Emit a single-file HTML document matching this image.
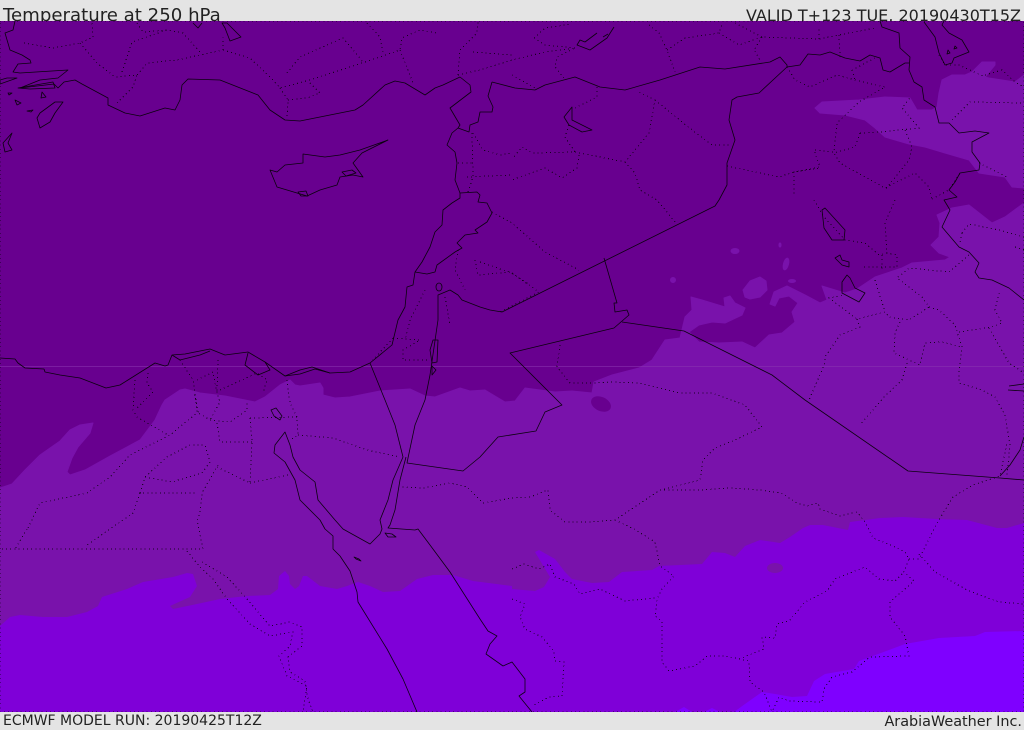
<!DOCTYPE html>
<html><head><meta charset="utf-8"><title>Temperature at 250 hPa</title>
<style>
html,body{margin:0;padding:0;background:#e4e4e4;width:1024px;height:729px;overflow:hidden}
.t{position:absolute;font-family:"DejaVu Sans",sans-serif;color:#222;white-space:pre;line-height:1}
svg{position:absolute;left:0;top:21px}
</style></head><body>
<div class="t" style="left:3px;top:7px;font-size:18.15px">Temperature at 250 hPa</div>
<div class="t" style="right:3px;top:8px;font-size:16px">VALID T+123 TUE, 20190430T15Z</div>
<div class="t" style="left:3px;top:714px;font-size:14px">ECMWF MODEL RUN: 20190425T12Z</div>
<div class="t" style="right:2px;top:715px;font-size:14.4px">ArabiaWeather Inc.</div>
<svg width="1024" height="691" viewBox="0 21 1024 691">
<rect x="0" y="21" width="1024" height="691" fill="#68008f"/>
<g fill="#7912ab" stroke="#7912ab" stroke-width="1" stroke-linejoin="round">
<path d="M0 488L12 484 25 470 40 455 60 441 70 430 80 425 93 423 90 433 78 447 72 458 67 472 70 475 85 470 110 456 140 440 155 420 162 405 165 400 180 390 185 389 200 393 225 396 255 402 265 397 280 385 290 380 295 385 300 386 320 383 323 388 323 395 335 398 350 397 380 391 410 389 425 396 435 397 460 388 470 391 485 390 505 402 515 401 525 388 555 392 572 391 592 393 594 382 612 375 639 368 652 360 665 340 680 338 685 317 692 310 691 297 702 300 725 307 724 298 730 296 735 303 745 308 742 315 725 323 712 322 699 325 689 332 699 342 719 343 742 342 755 348 769 335 782 333 795 322 792 312 798 303 789 296 779 298 775 306 770 304 774 292 787 286 805 295 820 303 827 300 822 286 845 293 857 289 875 277 902 268 912 263 945 260 950 257 939 253 931 245 939 237 940 223 937 215 952 208 969 205 992 223 1005 217 1024 203V712H0Z"/>
<path d="M1024 75L1015 82 989 78 985 77 995 65 995 62 982 62 972 72 965 75 952 75 942 80 939 93 937 107 932 110 917 110 910 98 885 97 859 100 822 102 815 108 820 113 845 115 865 120 875 128 885 137 909 144 925 147 945 153 969 160 979 173 1005 177 1012 187 1024 188Z"/>
<ellipse cx="735" cy="251" rx="4" ry="2.5"/><ellipse cx="673" cy="280" rx="2.5" ry="2.5"/><path d="M743 290L750 281 760 277 766 281 767 290 760 297 750 299 745 297Z"/><ellipse cx="792" cy="281" rx="3.5" ry="1.5"/><ellipse cx="786" cy="264" rx="2.5" ry="6" transform="rotate(15 786 264)"/><ellipse cx="780" cy="245" rx="1" ry="2"/><circle cx="807" cy="310" r="0.7"/>
</g>
<ellipse cx="601" cy="404" rx="10.5" ry="7" transform="rotate(25 601 404)" fill="#68008f"/>
<path fill="#7f00d8" d="M0 626L10 617 20 615 43 617 67 617 87 612 98 606 102 597 127 589 143 582 173 577 187 573 193 574 197 586 190 597 170 606 173 609 197 604 220 599 247 596 270 595 278 589 279 576 285 571 289 576 290 584 295 589 299 586 303 576 307 576 320 586 337 589 347 586 358 582 370 586 383 592 400 591 417 579 433 575 453 575 473 581 512 586 512 589 535 591 544 587 550 577 535 552 539 550 555 559 565 572 572 579 592 583 609 582 622 572 652 570 659 566 702 564 712 552 725 553 735 557 745 546 760 540 780 543 790 537 803 528 810 525 823 525 848 530 850 522 880 518 903 517 937 519 967 520 997 528 1007 528 1024 523V712H0Z"/>
<ellipse cx="775" cy="568" rx="8" ry="5" fill="#7912ab"/>
<path fill="#7f00ff" d="M1024 631L985 632 975 636 939 638 905 644 870 657 859 661 854 669 825 674 814 681 807 696 792 697 775 694 762 692 745 704 734 712H1024ZM675 712L684 707 692 712ZM704 712L712 708 720 712Z"/>
<rect x="0" y="366" width="1024" height="1" fill="#8a35b0" opacity=".55"/>
<g fill="none" stroke="#000" stroke-width="1" stroke-dasharray="1 3.2" shape-rendering="crispEdges" opacity=".8">
<path d="M0 21H1024V712H0ZM24 43L53 48 80 43 93 37 92 23M80 43L97 63 115 77 137 75 147 63 177 60 223 50 223 37M117 103L133 87 137 75M122 72L132 42 167 30 183 33 200 52M137 23L143 32 167 30M223 50L250 58 273 80 280 88 310 80 365 62 400 50 402 38 420 30 437 33M287 73L300 57 343 38 363 62M280 88L288 100 287 117M288 100L307 98 320 93 310 83M367 23L380 37 383 53M400 50L413 83M458 75L460 50 477 33 478 22M473 52L512 55M458 75L480 70 512 60 545 52 575 48 557 57 555 67 564 78M534 38L545 28 572 24M534 38L545 45 575 48M649 25L659 33 667 50 675 72M667 50L685 38 719 33 722 25M719 33L739 45 762 37 819 39 839 35 875 28M735 23L762 37M819 39V27M839 35L840 57M762 37L754 50 760 60M787 67L795 80 810 87 837 75 855 80 885 87 859 102 837 123 834 152 814 150 820 167 794 172 794 197M852 70L855 80M875 58L852 70M860 133L880 132 919 128 902 108 910 98M905 130L912 147 909 160 885 190M860 133L855 147 834 153 840 163 885 188 915 173 929 187 932 199M952 120L970 102 1024 103M985 75L1002 70 1015 82 1024 87M939 55L945 65 959 65 985 77M979 163L1009 178M932 199L949 190 960 173M472 133L473 177 468 192M473 133L483 150 500 155 512 153M458 163H473M467 177L512 175M597 87V97L575 108M569 125L565 137 575 152 532 153 522 147 514 157M575 152L625 162 649 133 655 100 639 92M655 100L692 130 712 145 732 145M579 155L577 168 562 178 545 168 512 180M625 162L635 173 640 190 657 200 675 222M727 166L779 177 794 172 820 168M512 75L535 88M492 212L512 223 545 252 579 270M480 262L512 273 539 292 500 312M458 250L455 270 465 290M895 200L885 223 887 253 897 255 897 267 862 267M814 200L824 217 845 240 865 243 879 255 887 253M882 255V270M962 233L960 243M962 233L969 224 999 230 1024 237M1015 247L1024 250M969 255L949 272 909 268 897 278 922 297 929 307 909 320 889 317 885 312 857 319 829 298 845 295M875 280L885 312M857 319L860 327 840 335 825 357 825 363 809 400M929 307L939 310 955 325 962 347 959 373 959 383 982 390 995 397 1005 415 1010 445 1007 475M959 332L992 327 1002 323 995 310 1000 290M989 328L1009 363 1024 373M900 322L895 333 894 353 920 365 925 343 942 342 962 347M907 363L902 380 884 397 860 425M560 345L557 367 570 383 594 383 612 382 639 383 679 393 712 393 745 405 762 427 735 440 715 448 703 460 700 480 660 490 615 520 590 522 565 522 550 510 548 490 530 497 512 498 483 503 467 487 450 483 423 488 402 487M660 490L700 490 730 488 760 490 781 493 797 503 807 506 818 503 820 509 840 516 857 512 865 522 873 538 893 546 905 552 909 559 904 572 914 581 890 602 890 617 905 636 909 656 870 657 852 672 832 677 824 689 822 702 789 701 779 697 772 712M909 559L919 559 934 529 937 523 953 497 973 485 1000 476 1007 443M919 554L935 572 969 591 999 602 1024 604M615 520L634 529 655 542 660 566 674 576 662 589 657 599 655 616 662 621 662 662 669 671 695 666 707 656 725 656 749 661 750 682 764 692 772 712M739 659L764 649 762 637 775 638 777 624 789 621 805 602 827 591 835 579 865 567 879 579 895 581 904 572M512 569L524 564 539 569 550 564 555 577 574 584 580 594 600 589 625 601 655 598M512 599L525 604 520 617 525 629 542 637 554 651 555 661 564 662 562 696 549 697 532 706M28 528L40 503 87 493 110 477 130 455 170 435 198 412 195 395M135 380L133 410 137 417 168 435M148 373L147 383 153 392 135 410M180 360L193 380 195 393 197 412 210 420 230 422 247 410 247 402M197 380L213 372 217 393 220 402 210 420M218 360L217 393M220 390L257 373 267 380 263 393M217 423L220 442 252 442M250 418L252 442 250 483 217 467M250 418L297 417M287 380L290 403 297 417 298 435 290 440M298 435L333 438 367 450 400 457M250 483L288 475M145 477L172 482 202 473 210 462 205 445 190 445 167 457 145 477 140 493 195 493M218 465L202 493 200 513 197 520 203 549 0 549M140 493L133 513 110 529 87 545M27 529L15 549M187 551L200 567 213 579 227 599 250 624 270 636 293 632 290 646 279 656 287 676 307 686 303 712M202 562L227 577 247 599 270 626 290 622 302 627 302 646 288 657 290 672 305 681 308 699 313 712M393 338L420 340 403 350 403 360 430 360M393 338L373 360M425 290L410 320 405 340M445 297L450 325M475 260L478 275 510 272 530 285"/>
</g>
<g fill="none" stroke="#000" stroke-width="0.8" stroke-linejoin="round" opacity=".9">
<path d="M15 21L13 30 5 33 10 50 22 55 30 60 31 63 18 64 13 72 20 73 68 70 58 78 40 80 20 88 54 84 58 88 64 82 75 80 82 84 108 98 108 105 125 113 140 116 165 108 175 110 180 100 182 85 188 79 220 80 258 95 270 110 285 120 300 121 330 115 355 110 363 105 385 85 395 81 405 83 425 95 435 88 443 85 460 77 470 85 471 92 450 108 460 125 458 128 452 133 447 145 455 152 457 163 455 180 460 193 460 198 452 203 443 210 442 225 435 232 430 247 422 262 415 272 413 285 407 287 405 307 398 320 392 345 370 363 350 372 330 373 315 369 300 374 285 376 265 362 248 352 225 355 210 349 185 354 172 355 168 365 165 366 155 363 120 385 106 388 80 378 60 375 45 372 44 369 25 368 18 363 15 359 0 358"/>
<path d="M172 355L180 360 200 355 210 351M248 353L245 365 258 375 270 370 265 362M285 376L300 370 312 367 330 373"/>
<path d="M492 82L488 96 493 107 492 112 480 112 478 122 470 125 469 132 458 128M492 82L515 88 535 90 545 85 575 77 600 87 625 90 660 80 700 67 725 69 770 62 780 57 787 65 787 67 800 65 808 54 820 55 830 52 845 58 860 61 870 55 880 58 883 70 890 72 905 63 909 63"/>
<path d="M880 21L882 27 899 33 900 48 910 57 909 70 914 82 922 87 924 100 935 107 939 123 949 123 959 133 975 131 989 133 972 142 972 152 980 163 979 170 960 173 955 182 949 190 957 197 944 200 950 210 942 227 959 247 969 252 979 263 975 272 979 278 992 280 1009 288 1024 300"/>
<path d="M787 67L759 93 737 97 732 100 729 120 735 140 727 163 727 185 719 200 715 206 512 307 502 312 490 310 480 307 462 300 458 295 450 290 438 295V320L430 375 425 400 415 425 408 458 407 463 463 471 480 457 498 437 536 431 545 412 562 405 510 353 614 328 629 315 627 310 615 312 614 303 617 303 604 258"/>
<path d="M622 322L684 331 772 375 805 400 908 471 1000 478 1024 480M1000 476L1010 465 1020 450 1024 437"/>
<path d="M460 193L477 192 480 195 478 202 487 203 492 213 487 222 475 230 478 233 465 235 457 243 462 248 455 252 437 265 435 272 427 274 415 272"/>
<path d="M370 363L385 400 395 425 403 457 393 480 388 500 380 520 382 529 380 534 370 544 343 529 335 520 318 500 315 482 300 470 293 457 290 445 285 432 275 445 274 453 285 462 295 480 300 500 320 520 325 529 333 536 333 549 340 556 350 571 357 592 358 602 387 649 403 679 417 712"/>
<path d="M406 457L400 480 395 510 390 525 388 528 415 530 418 529 430 545 450 572 480 619 488 631 497 636 490 644 486 654 503 666 512 662 525 679 525 692 519 696 532 712"/>
<path d="M388 140L360 150 340 155 325 157 303 154 303 163 285 165 277 172 270 170 277 187 297 193 307 196 320 190 337 185 340 177 353 175 363 177 353 163 362 153Z"/>
<path d="M342 172L352 170 356 173 346 176ZM298 192L306 191 308 196 301 196Z"/>
<path d="M63 102L55 102 40 113 37 118 40 128 50 122 55 113ZM12 133L3 143 5 152 12 150 8 143ZM0 84L17 78 7 78 0 80ZM18 88L53 82 55 88 30 89ZM42 92L46 97 41 98ZM27 111L33 110 31 112ZM8 93L12 93 9 95ZM15 100L21 103 17 105Z"/>
<path d="M222 23L227 23 241 37 230 41 225 28ZM193 23L198 28 202 23"/>
<path d="M572 107L564 117 569 125 582 132 592 130 584 126 572 120Z"/>
<path d="M614 27L607 38 590 50 577 45 580 40 585 42 597 33M603 37L608 34"/>
<path d="M924 22L935 37 939 53 945 65 952 63 954 58 969 52 962 40 949 33 942 25 944 21M948 50L950 53 947 54ZM955 46L957 48 954 49Z"/>
<path d="M822 210L825 208 845 230 844 240 832 240 824 228ZM835 258L840 255 842 260 849 262 849 267 842 265ZM847 275L842 282 842 293 859 302 865 293 855 288 850 278Z"/>
<path d="M433 340L438 340 437 362 432 363 430 350ZM432 366L436 370 432 375Z"/>
<ellipse cx="439" cy="287" rx="3" ry="4"/>
<path d="M271 410L276 408 282 416 280 420 274 416ZM354 557L359 559 361 561 356 559ZM385 533L392 534 396 537 388 537ZM1009 386L1024 384M1008 390L1024 391"/>
</g>
</svg>
</body></html>
